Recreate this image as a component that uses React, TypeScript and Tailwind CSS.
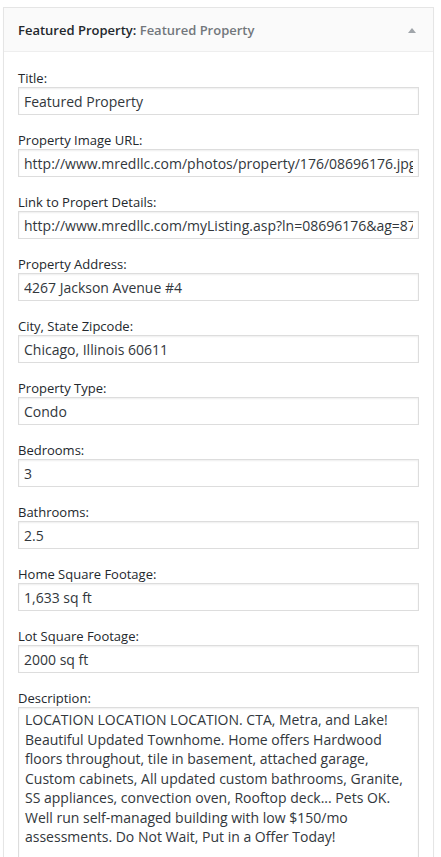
import React from 'react';

const fields: { label: string; value: string }[] = [
  { label: 'Title:', value: 'Featured Property' },
  { label: 'Property Image URL:', value: 'http://www.mredllc.com/photos/property/176/08696176.jpg' },
  { label: 'Link to Propert Details:', value: 'http://www.mredllc.com/myListing.asp?ln=08696176&ag=8716' },
  { label: 'Property Address:', value: '4267 Jackson Avenue #4' },
  { label: 'City, State Zipcode:', value: 'Chicago, Illinois 60611' },
  { label: 'Property Type:', value: 'Condo' },
  { label: 'Bedrooms:', value: '3' },
  { label: 'Bathrooms:', value: '2.5' },
  { label: 'Home Square Footage:', value: '1,633 sq ft' },
  { label: 'Lot Square Footage:', value: '2000 sq ft' },
];

const description =
  'LOCATION LOCATION LOCATION. CTA, Metra, and Lake! Beautiful Updated Townhome. Home offers Hardwood floors throughout, tile in basement, attached garage, Custom cabinets, All updated custom bathrooms, Granite, SS appliances, convection oven, Rooftop deck... Pets OK. Well run self-managed building with low $150/mo assessments. Do Not Wait, Put in a Offer Today!';

const Field: React.FC<{ label: string; value: string }> = ({ label, value }) => (
  <div className="flex flex-col">
    <label className="h-[20px] text-[13px] leading-[22px] text-[#23282d]">{label}</label>
    <input
      readOnly
      value={value}
      className="h-[28px] w-full border border-[#ddd] bg-white px-[5px] text-[14px] text-[#32373c] shadow-[inset_0_1px_2px_rgba(0,0,0,0.07)] outline-none"
    />
  </div>
);

export default function App() {
  return (
    <div className="min-h-screen bg-white pt-[7px] pl-[3px] font-['Open_Sans',sans-serif]">
      <div className="w-[431px] border border-[#e5e5e5] bg-white shadow-[0_1px_1px_rgba(0,0,0,0.04)]">
        <div className="flex h-[44px] items-center justify-between border-b border-[#eee] bg-[#fafafa] pl-[14px] pr-[17px] pt-[2px]">
          <h3 className="text-[13px] font-semibold text-[#23282d]">
            Featured Property: <span className="text-[#72777c]">Featured Property</span>
          </h3>
          <span className="h-0 w-0 border-x-[4px] border-b-[5px] border-x-transparent border-b-[#a0a5aa]" />
        </div>
        <div className="flex flex-col gap-[14px] px-[14px] pt-[15px] pb-[20px]">
          {fields.map((f) => (
            <Field key={f.label} label={f.label} value={f.value} />
          ))}
          <div className="flex flex-col">
            <label className="h-[20px] text-[13px] leading-[22px] text-[#23282d]">Description:</label>
            <textarea
              readOnly
              rows={10}
              value={description}
              className="w-full resize-none border border-[#ddd] bg-white px-[6px] pt-[2px] text-[14px] leading-[19.5px] text-[#32373c] shadow-[inset_0_1px_2px_rgba(0,0,0,0.07)] outline-none"
            />
          </div>
        </div>
      </div>
    </div>
  );
}
